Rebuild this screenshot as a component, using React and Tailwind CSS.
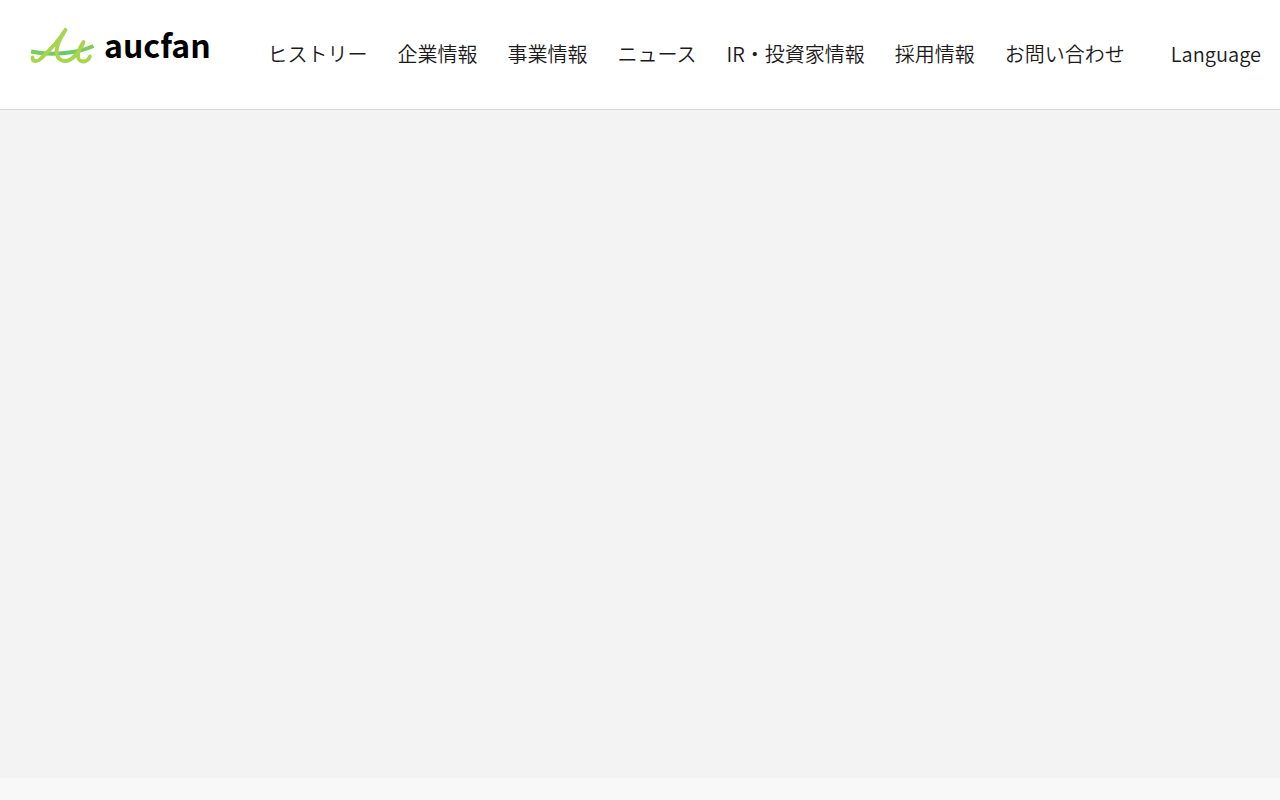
const links = [
  "ヒストリー",
  "企業情報",
  "事業情報",
  "ニュース",
  "IR・投資家情報",
  "採用情報",
  "お問い合わせ",
];

function Logo() {
  return (
    <a href="#top" aria-label="aucfan" className="flex shrink-0 items-start gap-2 text-black">
      <svg viewBox="28 24 68 42" className="h-[42px] w-[68px]" fill="none" strokeLinecap="round" strokeLinejoin="round" aria-hidden="true">
        <defs>
          <linearGradient id="swoosh" x1="31" y1="0" x2="94" y2="0" gradientUnits="userSpaceOnUse">
            <stop offset="0" stopColor="#7fcf5c" />
            <stop offset="0.5" stopColor="#66c96c" />
            <stop offset="1" stopColor="#80cc5c" />
          </linearGradient>
        </defs>
        <path d="M31 51.500C49 55.500 76 54 93.500 46" stroke="url(#swoosh)" strokeWidth="4" strokeLinecap="butt" />
        <path d="M32.500 57.500C32.500 62 37 62.500 41 58.500C51 49 59 41 65.500 29.800C61 37 57 43 56.500 51C56.500 58 61 62 67 60.800C75 58.500 80 51 83.500 42C80 47 78 52 78 56C78 63 87 63.500 90 56.500" stroke="#a9d44f" strokeWidth="3.800" />
      </svg>
      <span className="font-['Noto_Sans_CJK_JP',sans-serif] text-[32px] leading-10 font-bold">aucfan</span>
    </a>
  );
}

export default function App() {
  return (
    <div id="top" className="flex min-h-screen flex-col bg-[#f8f8f8] font-['Noto_Sans_CJK_JP',sans-serif] text-[#1c1a1b]">
      <header className="flex h-[110px] items-center justify-between border-b border-[#d8d8d8] bg-white pr-[19px] pl-7">
        <div className="pb-5">
          <Logo />
        </div>
        <div className="flex items-center gap-[46px] pb-0.5 text-[20px] leading-[30px] font-[350] whitespace-nowrap">
          <nav>
            <ul className="flex gap-[30px]">
              {links.map((label) => (
                <li key={label}>
                  <a href="#top">{label}</a>
                </li>
              ))}
            </ul>
          </nav>
          <button type="button">Language</button>
        </div>
      </header>
      <main className="mb-[22px] grow bg-[#f3f3f3]" />
    </div>
  );
}
